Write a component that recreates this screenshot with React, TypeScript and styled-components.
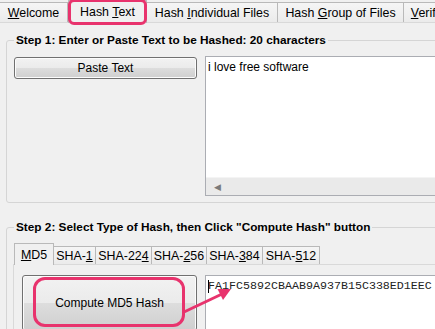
import styled, { createGlobalStyle } from 'styled-components';

const GlobalStyle = createGlobalStyle`
  html, body {
    margin: 0;
    padding: 0;
    background: #f0f0f0;
  }
  body {
    font-family: "Liberation Sans", Arial, sans-serif;
    font-size: 12px;
    color: #000;
    overflow: hidden;
  }
`;

const PINK = '#e8336d';

const Window = styled.div`
  position: relative;
  width: 435px;
  height: 329px;
  overflow: hidden;
  background: #f0f0f0;
`;

const TabStrip = styled.div`
  display: flex;
  align-items: flex-end;
  height: 23px;
  border-bottom: 1px solid #d9d9d9;
  box-sizing: border-box;
`;

const TopTab = styled.div<{ $w: number; $active?: boolean }>`
  flex: none;
  width: ${(p) => p.$w}px;
  height: ${(p) => (p.$active ? 23 : 20)}px;
  margin-bottom: ${(p) => (p.$active ? -1 : 0)}px;
  box-sizing: border-box;
  display: flex;
  align-items: center;
  justify-content: center;
  padding-top: ${(p) => (p.$active ? 0 : 1)}px;
  border: 1px solid #b9b9b9;
  border-bottom: none;
  border-left-width: ${(p) => (p.$active ? 1 : 0)}px;
  background: ${(p) =>
    p.$active ? '#f0f0f0' : 'linear-gradient(#f5f5f5, #ebebeb)'};
  font-size: 12.4px;
  white-space: nowrap;
`;

const TabBody = styled.div`
  padding-top: 10px;
`;

const Group = styled.fieldset<{ $top: number }>`
  margin: ${(p) => p.$top}px 0 0 6px;
  padding: 9px 7px 6px 7px;
  width: 520px;
  min-inline-size: 0;
  box-sizing: border-box;
  border: 1px solid #d5d5d5;
  border-radius: 3px;
`;

const Legend = styled.legend`
  padding: 0 2px;
  font-weight: bold;
  font-size: 11.8px;
  line-height: 14px;
`;

const Row = styled.div`
  display: flex;
  align-items: flex-start;
  gap: 8px;
`;

const Button = styled.div<{ $w: number; $h: number }>`
  flex: none;
  width: ${(p) => p.$w}px;
  height: ${(p) => p.$h}px;
  box-sizing: border-box;
  display: flex;
  align-items: center;
  justify-content: center;
  border: 1px solid #707070;
  border-radius: 3px;
  box-shadow: inset 0 0 0 1px #fcfcfc;
  background: linear-gradient(#f2f2f2 0%, #ebebeb 50%, #dddddd 50%, #cfcfcf 100%);
  font-size: 12px;
`;

const PasteButton = styled(Button)`
  margin-top: 1px;
`;

const TextBox = styled.div<{ $h: number }>`
  flex: 1;
  height: ${(p) => p.$h}px;
  box-sizing: border-box;
  display: flex;
  flex-direction: column;
  border: 1px solid #abadb3;
  background: #fff;
`;

const TextContent = styled.div`
  flex: 1;
  padding: 3px 2px;
  font-size: 12px;
  line-height: 14px;
`;

const HScrollBar = styled.div`
  height: 17px;
  display: flex;
  align-items: center;
  padding-left: 8px;
  background: #eaeaea;
  border-top: 1px solid #f4f4f4;
  color: #7a7a7a;
  font-size: 9px;
`;

const HashTabs = styled.div`
  margin-left: -1px;
`;

const InnerStrip = styled.div`
  display: flex;
  align-items: flex-end;
  height: 22px;
  padding-left: 1px;
  border-bottom: 1px solid #d9d9d9;
  box-sizing: border-box;
`;

const InnerTab = styled(TopTab)`
  height: ${(p) => (p.$active ? 22 : 18)}px;
`;

const InnerPanel = styled.div`
  border-left: 1px solid #d9d9d9;
  padding: 10px 0 0 8px;
`;

const HashText = styled.div`
  display: flex;
  align-items: center;
  padding: 3px 2px;
  font-family: "Liberation Mono", "Courier New", monospace;
  font-size: 11.67px;
  line-height: 14px;
  color: #222;
`;

const Caret = styled.span`
  width: 1px;
  height: 13px;
  margin-right: -1px;
  background: #000;
`;

const Highlight = styled.div<{ $x: number; $y: number; $w: number; $h: number; $r: number }>`
  position: absolute;
  left: ${(p) => p.$x}px;
  top: ${(p) => p.$y}px;
  width: ${(p) => p.$w}px;
  height: ${(p) => p.$h}px;
  box-sizing: border-box;
  border: 3px solid ${PINK};
  border-radius: ${(p) => p.$r}px;
  pointer-events: none;
`;

const Overlay = styled.svg`
  position: absolute;
  left: 0;
  top: 0;
  pointer-events: none;
`;

const topTabs = [
  { w: 68, label: <span><u>W</u>elcome</span> },
  { w: 79, label: <span>Hash <u>T</u>ext</span>, active: true },
  { w: 131, label: <span>Hash <u>I</u>ndividual Files</span> },
  { w: 126, label: <span>Hash <u>G</u>roup of Files</span> },
  { w: 78, label: <span><u>V</u>erify Hash</span> },
];

const hashTabs = [
  { w: 40, label: <span><u>M</u>D5</span>, active: true },
  { w: 42, label: <span>SHA-<u>1</u></span> },
  { w: 56, label: <span>SHA-22<u>4</u></span> },
  { w: 55, label: <span>SHA-<u>2</u>56</span> },
  { w: 56, label: <span>SHA-<u>3</u>84</span> },
  { w: 57, label: <span>SHA-<u>5</u>12</span> },
];

export default function App() {
  return (
    <Window>
      <GlobalStyle />
      <TabStrip>
        {topTabs.map((t, i) => (
          <TopTab key={i} $w={t.w} $active={t.active}>
            {t.label}
          </TopTab>
        ))}
      </TabStrip>

      <TabBody>
        <Group $top={0}>
          <Legend>Step 1: Enter or Paste Text to be Hashed: 20 characters</Legend>
          <Row>
            <PasteButton $w={183} $h={22}>Paste Text</PasteButton>
            <TextBox $h={140}>
              <TextContent>i love free software</TextContent>
              <HScrollBar>◀</HScrollBar>
            </TextBox>
          </Row>
        </Group>

        <Group $top={17}>
          <Legend>Step 2: Select Type of Hash, then Click "Compute Hash" button</Legend>
          <HashTabs>
            <InnerStrip>
              {hashTabs.map((t, i) => (
                <InnerTab key={i} $w={t.w} $active={t.active}>
                  {t.label}
                </InnerTab>
              ))}
            </InnerStrip>
            <InnerPanel>
              <Row>
                <Button $w={175} $h={56}>Compute MD5 Hash</Button>
                <TextBox $h={70}>
                  <HashText>
                    <Caret />
                    FA1FC5892CBAAB9A937B15C338ED1EEC
                  </HashText>
                </TextBox>
              </Row>
            </InnerPanel>
          </HashTabs>
        </Group>
      </TabBody>

      <Highlight $x={68} $y={-1} $w={79} $h={26} $r={6} />
      <Highlight $x={33} $y={277} $w={152} $h={50} $r={12} />
      <Overlay width={435} height={329}>
        <line x1={184} y1={312} x2={221} y2={294.5} stroke={PINK} strokeWidth={3} />
        <polygon points="231,289 223,300 217.5,289" fill={PINK} />
      </Overlay>
    </Window>
  );
}
